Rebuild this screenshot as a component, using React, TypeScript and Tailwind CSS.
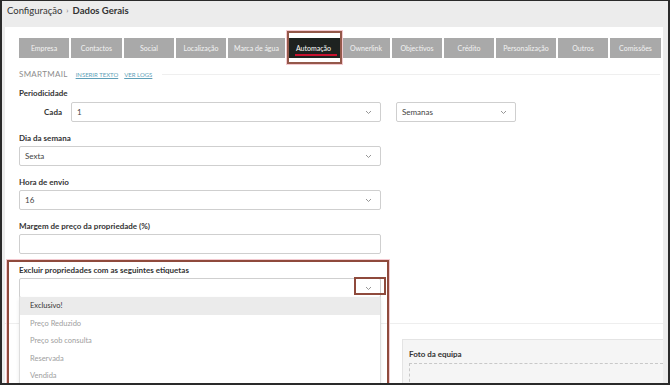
import { useState } from "react";

const tabs: { label: string; w: string }[] = [
  { label: "Empresa", w: "w-[50px]" },
  { label: "Contactos", w: "w-[51px]" },
  { label: "Social", w: "w-[50px]" },
  { label: "Localização", w: "w-[50px]" },
  { label: "Marca de água", w: "w-[57px]" },
  { label: "Automação", w: "w-[53px]" },
  { label: "Ownerlink", w: "w-[48px]" },
  { label: "Objectivos", w: "w-[50px]" },
  { label: "Crédito", w: "w-[50px]" },
  { label: "Personalização", w: "w-[60px]" },
  { label: "Outros", w: "w-[50px]" },
  { label: "Comissões", w: "w-[51px]" },
];

const etiquetas = ["Exclusivo!", "Preço Reduzido", "Preço sob consulta", "Reservada", "Vendida"];

function Chevron() {
  return (
    <svg width="7" height="5" viewBox="0 0 7 5" className="shrink-0">
      <path d="M1 1l2.5 2.5L6 1" fill="none" stroke="#8a8a8a" strokeWidth="0.9" />
    </svg>
  );
}

function Select({ value, className = "" }: { value?: string; className?: string }) {
  return (
    <div
      className={`flex h-[20px] shrink-0 items-center justify-between rounded-[2px] border border-[#cfcfcf] bg-white pl-[5px] pr-[8px] text-[8px] text-[#444] ${className}`}
    >
      <span>{value}</span>
      <Chevron />
    </div>
  );
}

function Label({ children }: { children: string }) {
  return <div className="h-[12px] text-[8px] leading-[12px] font-bold text-[#333]">{children}</div>;
}

function App() {
  const [activeTab] = useState<string>("Automação");

  return (
    <div className="relative flex h-[385px] w-[670px] flex-col overflow-hidden border-x-2 border-t border-b-2 border-[#2a2a2a] bg-[#ececec] font-['Lato','Liberation_Sans',sans-serif]">
      <div className="flex h-[26px] shrink-0 items-start pl-[5px] pt-[3px] text-[9.5px] leading-[13px] text-[#333]">
        <span>Configuração</span>
        <span className="mx-[4px] text-[8px] text-[#777]">›</span>
        <span className="font-bold">Dados Gerais</span>
      </div>

      <div className="relative ml-[3px] mr-[5px] min-h-0 flex-1 bg-white pt-[11px] pl-[14px]">
        {/* tabs */}
        <div className="flex gap-[2px]">
          {tabs.map((tab) => (
            <div
              key={tab.label}
              className={`flex h-[20px] shrink-0 items-center justify-center text-[7px] whitespace-nowrap ${tab.w} ${
                tab.label === activeTab ? "bg-[#1e2220] text-white" : "bg-[#a9a9a9] text-[#f3f3f3]"
              }`}
            >
              {tab.label}
            </div>
          ))}
        </div>

        {/* smartmail */}
        <div className="mt-[10px] flex h-[12px] items-center pr-[3px]">
          <span className="text-[8px] tracking-[0.3px] text-[#8d8d8d]">SMARTMAIL</span>
          <span className="ml-[8px] text-[6px] text-[#5f9fb8] underline">INSERIR TEXTO</span>
          <span className="ml-[6px] text-[6px] text-[#5f9fb8] underline">VER LOGS</span>
          <div className="ml-[10px] h-px flex-1 bg-[#efefef]" />
        </div>

        {/* form */}
        <div className="mt-[7px] flex w-[362px] flex-col gap-[10px]">
          <div className="flex flex-col gap-[3px]">
            <Label>Periodicidade</Label>
            <div className="flex items-center">
              <div className="w-[43px] shrink-0 text-right text-[8px] font-bold text-[#333]">Cada</div>
              <div className="ml-[9px] flex shrink-0 items-center gap-[15px]">
                <Select value="1" className="w-[310px]" />
                <Select value="Semanas" className="w-[120px]" />
              </div>
            </div>
          </div>

          <div className="flex flex-col gap-[2px]">
            <Label>Dia da semana</Label>
            <Select value="Sexta" />
          </div>

          <div className="flex flex-col gap-[2px]">
            <Label>Hora de envio</Label>
            <Select value="16" />
          </div>

          <div className="flex flex-col gap-[2px]">
            <Label>Margem de preço da propriedade (%)</Label>
            <div className="h-[20px] rounded-[2px] border border-[#cfcfcf]" />
          </div>

          <div className="relative flex flex-col gap-[2px]">
            <Label>Excluir propriedades com as seguintes etiquetas</Label>
            <Select />
            <div className="absolute top-[33px] left-0 z-10 w-[362px] border border-t-0 border-[#dedede] bg-white shadow-[0_2px_4px_rgba(0,0,0,0.08)]">
              {etiquetas.map((e, i) => (
                <div
                  key={e}
                  className={`flex h-[17.5px] items-center pl-[10px] text-[7.5px] ${
                    i === 0 ? "bg-[#ebebeb] text-[#333]" : "text-[#a0a0a0]"
                  }`}
                >
                  {e}
                </div>
              ))}
            </div>
          </div>
        </div>

        {/* foto da equipa */}
        <div className="mt-[25px] -ml-[14px] border-t border-[#eeeeee] pt-[15px]">
          <div className="ml-[397px] h-[60px] border-t border-l border-[#e4e4e4] bg-[#f5f5f5] pt-[8px] pl-[6px]">
            <div className="text-[8px] font-bold text-[#333]">Foto da equipa</div>
            <div className="mt-[3px] h-[40px] border-t border-l border-dashed border-[#c8c8c8]" />
          </div>
        </div>
      </div>

      {/* annotation boxes */}
      <div className="pointer-events-none absolute top-[30px] left-[285px] h-[33px] w-[55px] border-2 border-[#94584a] shadow-[0_0_0_1px_#f3c9cf]" />
      <div className="pointer-events-none absolute top-[53px] left-[293px] h-[1.5px] w-[42px] bg-[#c8102e]" />
      <div className="pointer-events-none absolute top-[259px] left-[5px] h-[127px] w-[382px] border-2 border-[#8f4a3c] shadow-[0_0_0_1px_#f3c9cf]" />
      <div className="pointer-events-none absolute top-[276px] left-[352px] h-[18px] w-[32px] border-2 border-[#8f4a3c]" />
    </div>
  );
}

export default App;
